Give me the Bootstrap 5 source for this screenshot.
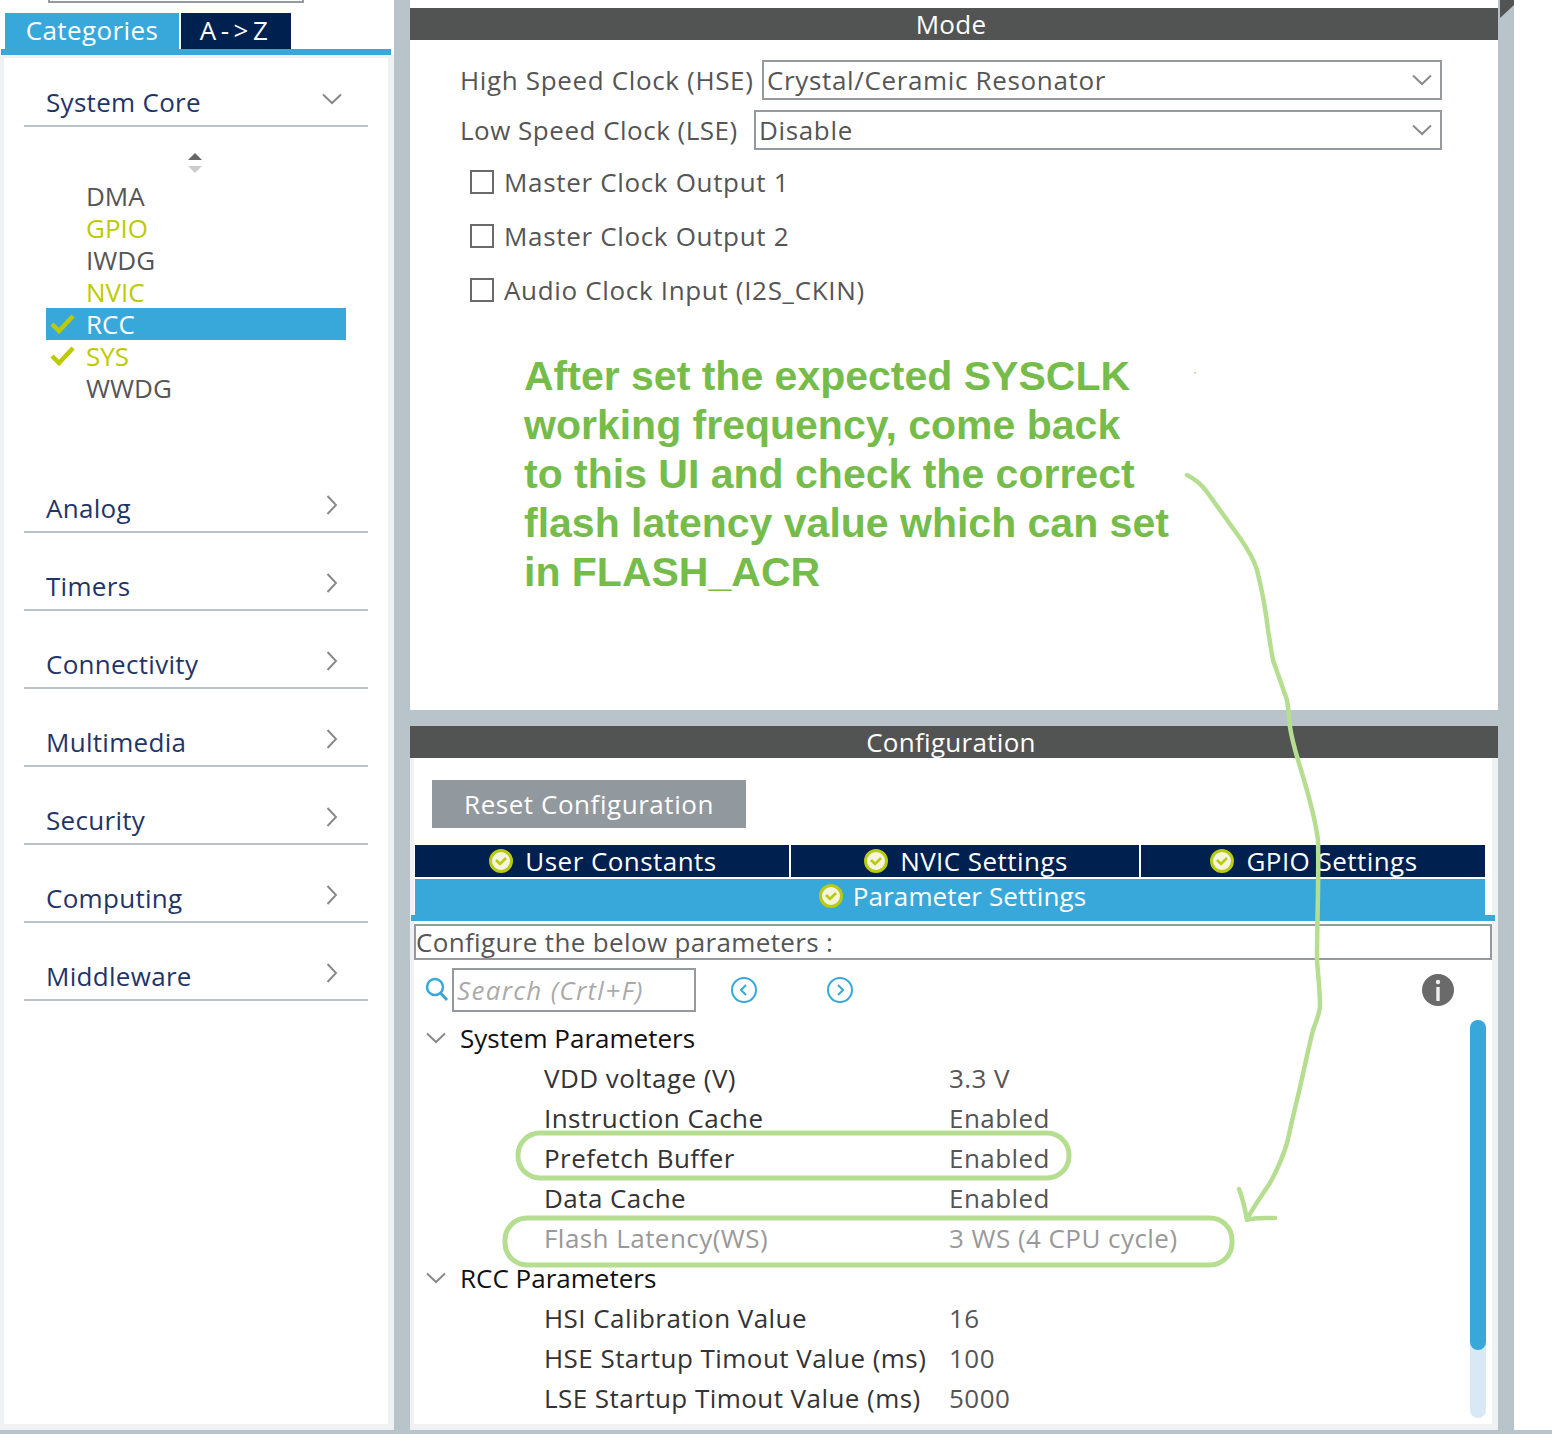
<!DOCTYPE html>
<html lang="en">
<head>
<meta charset="UTF-8" />
<title>Clock configuration</title>
<link rel="stylesheet" href="https://cdn.jsdelivr.net/npm/bootstrap@5.3.3/dist/css/bootstrap.min.css" />
<style>
  html, body { background: #fff; }
  body { font-family: "Open Sans", "Noto Sans", sans-serif; font-size: 26px; line-height: 32px; color: #555; width: 1552px; height: 1454px; overflow: hidden; position: relative; }
  .app { height: 1434px; border-bottom: 4px solid #b9c3ca; }
  .app-main { width: 1514px; height: 1430px; background: #b9c3ca; }
  /* left side */
  .side { width: 394px; background: #fff; }
  .side-top { height: 13px; padding-left: 48px; }
  .side-top div { width: 256px; height: 4px; margin-top: -1px; border: 2px solid #949a9e; border-top: 0; }
  .side-tabs { height: 36px; padding-left: 5px; gap: 2px; }
  .tab-cat { width: 174px; background: #38a8db; color: #fff; letter-spacing: .4px; padding-bottom: 2px; }
  .tab-az { width: 110px; background: #00204f; color: #fff; letter-spacing: 4.5px; padding-bottom: 2px; }
  .side-rule { height: 6px; width: 390px; margin-left: 1px; background: #38a8db; }
  .side-body { flex: 1; background: #fff; border: solid #f0f1f3; border-width: 3px 6px 6px 4px; padding: 0 20px; }
  .cat-head { height: 68px; width: 344px; padding: 0 30px 0 22px; color: #1f3568; border-bottom: 2px solid #b9c3ca; letter-spacing: .3px; }
  .cat-head svg { margin-bottom: 6px; }
  .cat-head.first { height: 69px; padding: 22px 26px 1px 22px; }
  .cat-gap { height: 78px; padding-top: 30px; }
  .scroll-mark { height: 53px; padding-left: 162px; padding-top: 24px; }
  .ip-list { padding-left: 22px; width: 322px; }
  .ip-row { height: 32px; width: 300px; padding-left: 40px; position: relative; }
  .ip-on { color: #bccb00; }
  .ip-sel { background: #38a8db; color: #fff; }
  .ip-tick { position: absolute; left: 4px; top: 5px; }
  .list-gap { height: 51px; }
  /* right side */
  .work { width: 1088px; margin: 0 16px; }
  .pane-mode { height: 710px; background: #fff; padding-top: 8px; }
  .pane-head { height: 32px; background: #525453; color: #fff; letter-spacing: .3px; padding-right: 6px; }
  .clock-row { height: 50px; padding-left: 50px; letter-spacing: .65px; }
  .clock-box { height: 40px; width: 680px; border: 2px solid #949a9e; padding: 0 8px 0 3px; color: #555; }
  .clock-box.low { width: 688px; }
  .rows-top { padding-top: 20px; }
  .clock-label { width: 302px; height: 40px; }
  .clock-label.low { width: 294px; letter-spacing: .5px; }
  .check-row { height: 54px; padding-left: 60px; gap: 10px; letter-spacing: .67px; }
  .check-box { width: 24px; height: 24px; border: 2px solid #6a6a6a; background: #fff; }
  .check-list { margin-top: -5px; }
  .note { font-family: "Liberation Sans", Arial, sans-serif; font-weight: 700; font-size: 41px; line-height: 49px; color: #76bc4b; padding: 35px 0 0 114px; }
  .pane-conf { flex: 1; margin-top: 16px; background: #fff; }
  .conf-body { flex: 1; border: solid #f0f1f3; border-width: 0 6px 6px 4px; position: relative; }
  .reset-btn { width: 314px; height: 48px; margin: 22px 0 17px 18px; background: #91989e; color: #fff; border-radius: 0; border: 0; font-size: 26px; padding: 0; letter-spacing: .55px; }
  .tab-row { height: 32px; gap: 2px; padding-left: 1px; width: 1072px; }
  .tab-dark { background: #00204f; color: #fff; gap: 12px; padding-left: 2px; letter-spacing: .45px; }
  .tab-live { height: 36px; margin: 2px 0 0 1px; width: 1070px; background: #38a8db; color: #fff; gap: 10px; padding: 0 0 2px 5px; letter-spacing: .1px; }
  .tab-rule { height: 6px; width: 1084px; margin-left: -3px; background: #38a8db; }
  .conf-note { height: 36px; margin-top: 3px; width: 1078px; border: 2px solid #949a9e; letter-spacing: .35px; }
  .search-row { height: 60px; padding-left: 11px; }
  .search-box { width: 244px; height: 44px; margin-left: 3px; border: 2px solid #949a9e; padding-left: 3px; font-style: italic; color: #aaa; letter-spacing: 1.3px; }
  .nav-one { margin-left: 34px; }
  .nav-two { margin-left: 68px; }
  .info-one { margin-left: auto; margin-right: 38px; }
  .tree-row { height: 40px; padding-bottom: 4px; letter-spacing: .45px; }
  .tree-head { color: #111; padding-left: 12px; letter-spacing: 0; }
  .tree-head span { margin-left: 14px; }
  .tree-key { width: 405px; margin-left: 130px; color: #333; }
  .tree-val { color: #555; }
  .tree-off { color: #999; }
  .bar-track { position: absolute; left: 1056px; top: 262px; width: 16px; height: 398px; border-radius: 8px; background: #d8e8f5; }
  .bar-thumb { height: 330px; border-radius: 8px; background: #38a8db; }
  .ink { position: absolute; left: 0; top: 0; pointer-events: none; }
  .corner-mark { position: absolute; left: 1500px; top: 0; }
</style>
</head>
<body>
<svg width="0" height="0" class="position-absolute">
  <symbol id="chev" viewBox="0 0 20 12"><path d="M1 1.5 10 10 19 1.5" fill="none" stroke="#8a8a8a" stroke-width="2"/></symbol>
  <symbol id="chevr" viewBox="0 0 12 20"><path d="M1.5 1 10 10 1.5 19" fill="none" stroke="#8a8a8a" stroke-width="2"/></symbol>
  <symbol id="ok" viewBox="0 0 24 24"><circle cx="12" cy="12" r="10.5" fill="#f4f4e0" stroke="#b9cc0b" stroke-width="3"/><path d="M7 11 11 15 17 9" fill="none" stroke="#b9cc0b" stroke-width="2.6"/></symbol>
  <symbol id="tick" viewBox="0 0 26 22"><path d="M2 11 9 18 23 3" fill="none" stroke="#bccb00" stroke-width="4.5"/></symbol>
</svg>
<div class="app">
  <div class="app-main d-flex">
    <aside class="side d-flex flex-column">
      <div class="side-top"><div></div></div>
      <div class="side-tabs d-flex">
        <div class="tab-cat d-flex align-items-center justify-content-center">Categories</div>
        <div class="tab-az d-flex align-items-center justify-content-center">A-&gt;Z</div>
      </div>
      <div class="side-rule"></div>
      <div class="side-body d-flex flex-column">
        <div class="cat-head first d-flex align-items-center justify-content-between">System Core <svg width="20" height="12"><use href="#chev"/></svg></div>
        <div class="scroll-mark"><svg class="d-block" width="18" height="24" viewBox="0 0 18 24"><path d="M9 2 16 9H2z" fill="#666"/><path d="M2 15H16L9 22z" fill="#ccc"/></svg></div>
        <div class="ip-list">
          <div class="ip-row d-flex align-items-center">DMA</div>
          <div class="ip-row ip-on d-flex align-items-center">GPIO</div>
          <div class="ip-row d-flex align-items-center">IWDG</div>
          <div class="ip-row ip-on d-flex align-items-center">NVIC</div>
          <div class="ip-row ip-sel d-flex align-items-center"><svg class="ip-tick" width="26" height="22"><use href="#tick"/></svg>RCC</div>
          <div class="ip-row ip-on d-flex align-items-center"><svg class="ip-tick" width="26" height="22"><use href="#tick"/></svg>SYS</div>
          <div class="ip-row d-flex align-items-center">WWDG</div>
        </div>
        <div class="list-gap"></div>
        <div class="cat-head cat-gap d-flex align-items-center justify-content-between">Analog <svg width="12" height="20"><use href="#chevr"/></svg></div>
        <div class="cat-head cat-gap d-flex align-items-center justify-content-between">Timers <svg width="12" height="20"><use href="#chevr"/></svg></div>
        <div class="cat-head cat-gap d-flex align-items-center justify-content-between">Connectivity <svg width="12" height="20"><use href="#chevr"/></svg></div>
        <div class="cat-head cat-gap d-flex align-items-center justify-content-between">Multimedia <svg width="12" height="20"><use href="#chevr"/></svg></div>
        <div class="cat-head cat-gap d-flex align-items-center justify-content-between">Security <svg width="12" height="20"><use href="#chevr"/></svg></div>
        <div class="cat-head cat-gap d-flex align-items-center justify-content-between">Computing <svg width="12" height="20"><use href="#chevr"/></svg></div>
        <div class="cat-head cat-gap d-flex align-items-center justify-content-between">Middleware <svg width="12" height="20"><use href="#chevr"/></svg></div>
      </div>
    </aside>
    <main class="work d-flex flex-column">
      <section class="pane-mode">
        <div class="pane-head d-flex align-items-center justify-content-center">Mode</div>
        <div class="rows-top">
          <div class="clock-row d-flex"><span class="clock-label d-flex align-items-center">High Speed Clock (HSE)</span><div class="clock-box d-flex align-items-center justify-content-between">Crystal/Ceramic Resonator <svg width="20" height="12"><use href="#chev"/></svg></div></div>
          <div class="clock-row d-flex"><span class="clock-label low d-flex align-items-center">Low Speed Clock (LSE)</span><div class="clock-box low d-flex align-items-center justify-content-between">Disable <svg width="20" height="12"><use href="#chev"/></svg></div></div>
        </div>
        <div class="check-list">
          <div class="check-row d-flex align-items-center"><div class="check-box"></div>Master Clock Output 1</div>
          <div class="check-row d-flex align-items-center"><div class="check-box"></div>Master Clock Output 2</div>
          <div class="check-row d-flex align-items-center"><div class="check-box"></div>Audio Clock Input (I2S_CKIN)</div>
        </div>
        <div class="note">After set the expected SYSCLK<br>working frequency, come back<br>to this UI and check the correct<br>flash latency value which can set<br>in FLASH_ACR</div>
      </section>
      <section class="pane-conf d-flex flex-column">
        <div class="pane-head d-flex align-items-center justify-content-center">Configuration</div>
        <div class="conf-body d-flex flex-column">
          <button class="reset-btn btn" type="button">Reset Configuration</button>
          <div class="tab-row d-flex">
            <div class="tab-dark d-flex align-items-center justify-content-center" data-w="374"><svg width="24" height="24"><use href="#ok"/></svg>User Constants</div>
            <div class="tab-dark d-flex align-items-center justify-content-center" data-w="348"><svg width="24" height="24"><use href="#ok"/></svg>NVIC Settings</div>
            <div class="tab-dark d-flex align-items-center justify-content-center" data-w="344"><svg width="24" height="24"><use href="#ok"/></svg>GPIO Settings</div>
          </div>
          <div class="tab-live d-flex align-items-center justify-content-center"><svg width="24" height="24"><use href="#ok"/></svg>Parameter Settings</div>
          <div class="tab-rule"></div>
          <div class="conf-note d-flex align-items-center">Configure the below parameters :</div>
          <div class="search-row d-flex align-items-center">
            <svg width="24" height="26" viewBox="0 0 24 26"><circle cx="10" cy="10" r="8" fill="none" stroke="#38a8db" stroke-width="2.5"/><path d="M15.5 16 22 23" stroke="#38a8db" stroke-width="3"/></svg>
            <div class="search-box d-flex align-items-center">Search (Crtl+F)</div>
            <svg class="nav-one" width="28" height="28" viewBox="0 0 28 28"><circle cx="14" cy="14" r="12" fill="none" stroke="#38a8db" stroke-width="2"/><path d="M16 9 11 14 16 19" fill="none" stroke="#38a8db" stroke-width="2"/></svg>
            <svg class="nav-two" width="28" height="28" viewBox="0 0 28 28"><circle cx="14" cy="14" r="12" fill="none" stroke="#38a8db" stroke-width="2"/><path d="M12 9 17 14 12 19" fill="none" stroke="#38a8db" stroke-width="2"/></svg>
            <svg class="info-one" width="32" height="32" viewBox="0 0 32 32"><circle cx="16" cy="16" r="16" fill="#6a6a6a"/><circle cx="16" cy="8" r="2.2" fill="#eee"/><path d="M16 13V27" stroke="#eee" stroke-width="3.4"/></svg>
          </div>
          <div class="tree-row tree-head d-flex align-items-center"><svg width="20" height="12"><use href="#chev"/></svg><span>System Parameters</span></div>
          <div class="tree-row d-flex align-items-center"><div class="tree-key">VDD voltage (V)</div><div class="tree-val">3.3 V</div></div>
          <div class="tree-row d-flex align-items-center"><div class="tree-key">Instruction Cache</div><div class="tree-val">Enabled</div></div>
          <div class="tree-row d-flex align-items-center"><div class="tree-key">Prefetch Buffer</div><div class="tree-val">Enabled</div></div>
          <div class="tree-row d-flex align-items-center"><div class="tree-key">Data Cache</div><div class="tree-val">Enabled</div></div>
          <div class="tree-row tree-off d-flex align-items-center"><div class="tree-key tree-off">Flash Latency(WS)</div><div class="tree-val tree-off">3 WS (4 CPU cycle)</div></div>
          <div class="tree-row tree-head d-flex align-items-center"><svg width="20" height="12"><use href="#chev"/></svg><span>RCC Parameters</span></div>
          <div class="tree-row d-flex align-items-center"><div class="tree-key">HSI Calibration Value</div><div class="tree-val">16</div></div>
          <div class="tree-row d-flex align-items-center"><div class="tree-key">HSE Startup Timout Value (ms)</div><div class="tree-val">100</div></div>
          <div class="tree-row d-flex align-items-center"><div class="tree-key">LSE Startup Timout Value (ms)</div><div class="tree-val">5000</div></div>
          <div class="bar-track"><div class="bar-thumb"></div></div>
        </div>
      </section>
    </main>
  </div>
</div>
<svg class="corner-mark" width="14" height="18" viewBox="0 0 14 18"><path d="M0 0H14V5L0 18z" fill="#525453"/></svg>
<!-- hand-drawn annotation on top of the screenshot -->
<svg class="ink" width="1552" height="1454" viewBox="0 0 1552 1454" fill="none" stroke="#b5de90" stroke-linecap="round" stroke-linejoin="round">
  <circle cx="1195" cy="373" r="1" fill="#b5de90" stroke="none"/>
  <rect x="518" y="1133" width="551" height="45" rx="22" stroke-width="5"/>
  <rect x="505" y="1218" width="727" height="47" rx="22" stroke-width="5"/>
  <path stroke-width="4.5" d="M1187 475C1195 479 1202 485 1207 492L1240 538C1249 551 1254 560 1257 570C1262 590 1266 612 1268 630C1270 642 1271 650 1273 660L1287 700C1289 712 1289 720 1290 727C1292 740 1295 750 1298 760C1304 780 1314 810 1318 840C1319 880 1317 920 1317 960C1318 975 1320 990 1320 1007C1319 1015 1316 1022 1313 1030C1308 1050 1303 1075 1297 1100C1292 1120 1289 1135 1287 1143C1282 1160 1276 1172 1270 1183C1262 1195 1254 1206 1247 1219"/>
  <path stroke-width="4.5" d="M1239 1189C1242 1197 1245 1208 1247 1220C1255 1217 1265 1218 1275 1218"/>
</svg>
<script src="https://cdn.jsdelivr.net/npm/bootstrap@5.3.3/dist/js/bootstrap.bundle.min.js"></script>
<script>
  // tab widths come from the tab data
  document.querySelectorAll(".tab-dark").forEach((tab) => {
    tab.style.width = tab.dataset.w + "px";
  });
</script>
</body>
</html>
